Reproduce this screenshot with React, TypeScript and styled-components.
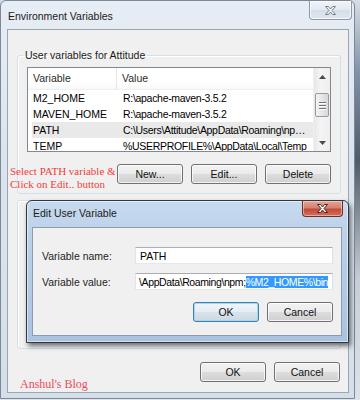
import styled, {createGlobalStyle, css} from "styled-components";

const GlobalStyle = createGlobalStyle`
    html, body {
        margin: 0;
        padding: 0;
    }
    body {
        width: 360px;
        height: 400px;
        overflow: hidden;
        font-family: "Liberation Sans", Arial, sans-serif;
        font-size: 10.5px;
        color: #000;
    }
`;

const Desktop = styled.div`
    position: relative;
    width: 360px;
    height: 400px;
    overflow: hidden;
    background: linear-gradient(180deg, #d7dde4 0%, #7f93a8 18%, #4f5b68 40%, #c8ced5 70%, #dfe3e8 100%);
`;

const Window = styled.div`
    width: 355px;
    height: 399px;
    box-sizing: border-box;
    display: flex;
    flex-direction: column;
    border: 1px solid #7b8898;
    border-radius: 6px 6px 0 0;
    padding: 0 5px 5px 6px;
    background: linear-gradient(180deg, #e6edf5 0%, #dbe4ee 40%, #d5dfea 100%);
`;

const TitleBar = styled.div`
    height: 28px;
    display: flex;
    align-items: flex-start;
    flex-shrink: 0;
`;

const Title = styled.div`
    margin: 9px 0 0 1px;
    line-height: 13px;
    font-size: 10.5px;
    color: #1b1b1b;
`;

const CloseButton = styled.div<{ $active?: boolean }>`
    margin-left: auto;
    display: flex;
    align-items: center;
    justify-content: center;
    box-sizing: border-box;
    border-radius: 0 0 4px 4px;
    ${({$active}) => $active ? css`
        width: 41px;
        height: 16px;
        margin-right: -1px;
        border: 1px solid #6d2f2a;
        border-top: none;
        background: linear-gradient(180deg, #e4a596 0%, #d7826f 45%, #c14a38 55%, #d0705c 100%);
        box-shadow: inset 0 0 0 1px rgba(255, 230, 220, 0.5);
    ` : css`
        width: 43px;
        height: 19px;
        margin-right: -3px;
        border: 1px solid #8c9aab;
        border-top: none;
        background: linear-gradient(180deg, #f1f4f8 0%, #e3e9f0 50%, #d6dee8 51%, #dfe6ee 100%);
        box-shadow: inset 0 0 0 1px rgba(255, 255, 255, 0.7);
    `}
`;

const Client = styled.div`
    flex: 1;
    display: flex;
    flex-direction: column;
    border: 1px solid #9aa6b3;
    background: #f0f0f0;
`;

const GroupBox = styled.fieldset<{ $grow?: boolean }>`
    margin: 19px 7px 0 9px;
    padding: 0 9px 9px 9px;
    border: 1px solid #d5dfe5;
    border-radius: 3px;
    box-shadow: inset 1px 1px 0 #fff;
    min-width: 0;
    ${({$grow}) => $grow && css`
        flex: 1;
        margin-top: 6px;
    `}
`;

const Legend = styled.legend`
    margin-left: -4px;
    padding: 0 2px;
    line-height: 13px;
    color: #1b1b1b;
`;

const ListView = styled.div`
    margin-top: 5px;
    height: 85px;
    box-sizing: border-box;
    display: flex;
    border: 1px solid #828790;
    background: #fff;
`;

const ListBody = styled.div`
    flex: 1;
    min-width: 0;
    overflow: hidden;
`;

const HeaderRow = styled.div`
    display: grid;
    grid-template-columns: 89px 1fr;
    height: 21px;
    border-bottom: 1px solid #eef0f2;
    background: linear-gradient(180deg, #ffffff 0%, #ffffff 70%, #f7f8fa 100%);
`;

const HeaderCell = styled.div`
    line-height: 21px;
    padding-left: 5px;
    color: #2b2b2b;
    &:first-child {
        border-right: 1px solid #e5e5e5;
    }
`;

const Row = styled.div<{ $selected?: boolean }>`
    display: grid;
    grid-template-columns: 85px 1fr;
    height: 16px;
    margin-left: 4px;
    background: ${({$selected}) => $selected ? "#e9e9e9" : "transparent"};
`;

const Cell = styled.div`
    line-height: 16px;
    padding-left: 1px;
    white-space: nowrap;
    overflow: hidden;
    text-overflow: ellipsis;
    & + & {
        padding-left: 6px;
        letter-spacing: -0.3px;
    }
`;

const ScrollBar = styled.div`
    width: 16px;
    display: flex;
    flex-direction: column;
    background: linear-gradient(90deg, #e7e7e7 0%, #f4f4f4 40%, #efefef 100%);
    border-left: 1px solid #f0f0f0;
`;

const ScrollArrow = styled.div`
    height: 17px;
    display: flex;
    align-items: center;
    justify-content: center;
`;

const ScrollTrack = styled.div`
    flex: 1;
    padding-top: 8px;
`;

const Thumb = styled.div`
    margin: 0 1px;
    height: 24px;
    box-sizing: border-box;
    border: 1px solid #979aa0;
    border-radius: 2px;
    background: linear-gradient(90deg, #f3f3f3 0%, #e6e6e6 50%, #d8d8d8 100%);
    display: flex;
    flex-direction: column;
    align-items: center;
    justify-content: center;
    gap: 2px;
`;

const Grip = styled.div`
    width: 7px;
    height: 1px;
    background: #6f7378;
    box-shadow: 0 1px 0 #fff;
`;

const ButtonRow = styled.div<{ $top?: number }>`
    display: flex;
    justify-content: flex-end;
    gap: 8px;
    margin-top: ${({$top}) => $top ?? 12}px;
`;

const Button = styled.div<{ $focused?: boolean }>`
    width: 66px;
    height: 20px;
    box-sizing: border-box;
    display: flex;
    align-items: center;
    justify-content: center;
    border: 1px solid #707070;
    border-radius: 3px;
    background: linear-gradient(180deg, #f2f2f2 0%, #ebebeb 48%, #dddddd 52%, #cfcfcf 100%);
    box-shadow: inset 0 0 0 1px rgba(255, 255, 255, 0.75);
    color: #111;
    ${({$focused}) => $focused && css`
        border-color: #3c7fb1;
        background: linear-gradient(180deg, #f0f5f9 0%, #e6eef4 48%, #d7e3ec 52%, #cbd9e4 100%);
        box-shadow: inset 0 0 0 1px #a8d6f2;
    `}
`;

const BottomRow = styled.div`
    display: flex;
    align-items: flex-start;
    gap: 8px;
    padding: 13px 8px 1px 12px;
`;

const BlogName = styled.div`
    margin-right: auto;
    padding-top: 15px;
    font-family: "Liberation Serif", "Times New Roman", serif;
    font-size: 12px;
    line-height: 14px;
    color: #ee4a5a;
`;

const Annotation = styled.div`
    position: absolute;
    left: 10px;
    top: 165px;
    font-family: "Liberation Serif", "Times New Roman", serif;
    font-size: 11px;
    line-height: 13px;
    color: #f23c3c;
`;

const Dialog = styled.div`
    position: absolute;
    left: 26px;
    top: 200px;
    width: 323px;
    height: 143px;
    box-sizing: border-box;
    display: flex;
    flex-direction: column;
    border: 1px solid #2e3742;
    border-radius: 6px 6px 0 0;
    padding: 0 6px 6px 5px;
    background: linear-gradient(180deg, #c7daee 0%, #b9d0e8 30%, #a9c3e0 100%);
    box-shadow: 2px 3px 5px rgba(0, 0, 0, 0.55), inset 0 0 0 1px rgba(255, 255, 255, 0.5);
`;

const DialogTitleBar = styled(TitleBar)`
    height: 26px;
`;

const DialogTitle = styled(Title)`
    margin-top: 6px;
`;

const DialogClient = styled.div`
    flex: 1;
    border: 1px solid #8e9bab;
    background: #f0f0f0;
    padding: 19px 8px 0 9px;
`;

const FieldRow = styled.div`
    display: grid;
    grid-template-columns: 93px 198px;
    align-items: center;
    & + & {
        margin-top: 9px;
    }
`;

const FieldLabel = styled.div`
    color: #1e1e1e;
`;

const TextBox = styled.div<{ $scrolled?: boolean }>`
    height: 17px;
    box-sizing: border-box;
    display: flex;
    align-items: center;
    justify-content: ${({$scrolled}) => $scrolled ? "flex-end" : "flex-start"};
    padding: 0 4px;
    overflow: hidden;
    white-space: nowrap;
    letter-spacing: ${({$scrolled}) => $scrolled ? "-0.4px" : "0"};
    border: 1px solid #abadb3;
    border-color: #abadb3 #dbdfe6 #e3e9ef #e2e3ea;
    background: #fff;
    & > span {
        flex-shrink: 0;
    }
`;

const Selection = styled.span`
    background: #3399ff;
    color: #fff;
`;

const CloseGlyph = ({active}: { active?: boolean }) => (
    <svg width="11" height="9" viewBox="0 0 11 9">
        <path
            d="M0.5 0.5 H3.5 L5.5 3 L7.5 0.5 H10.5 L7 4.5 L10.5 8.5 H7.5 L5.5 6 L3.5 8.5 H0.5 L4 4.5 Z"
            fill={active ? "#ffffff" : "#f4f6f9"}
            stroke={active ? "#4a2320" : "#75808c"}
            strokeWidth="1"
            strokeLinejoin="round"
        />
    </svg>
);

const Arrow = ({down}: { down?: boolean }) => (
    <svg width="7" height="4" viewBox="0 0 7 4">
        <path d={down ? "M0 0 H7 L3.5 4 Z" : "M0 4 H7 L3.5 0 Z"} fill="#4a4a4a"/>
    </svg>
);

const userVariables = [
    {name: "M2_HOME", value: "R:\\apache-maven-3.5.2"},
    {name: "MAVEN_HOME", value: "R:\\apache-maven-3.5.2"},
    {name: "PATH", value: "C:\\Users\\Attitude\\AppData\\Roaming\\npm;%M2_HOME%\\bin", selected: true},
    {name: "TEMP", value: "%USERPROFILE%\\AppData\\Local\\Temp"},
];

export default function App() {
    return (
        <Desktop>
            <GlobalStyle/>
            <Window>
                <TitleBar>
                    <Title>Environment Variables</Title>
                    <CloseButton><CloseGlyph/></CloseButton>
                </TitleBar>
                <Client>
                    <GroupBox>
                        <Legend>User variables for Attitude</Legend>
                        <ListView>
                            <ListBody>
                                <HeaderRow>
                                    <HeaderCell>Variable</HeaderCell>
                                    <HeaderCell>Value</HeaderCell>
                                </HeaderRow>
                                {userVariables.map(item => (
                                    <Row key={item.name} $selected={item.selected}>
                                        <Cell>{item.name}</Cell>
                                        <Cell>{item.value}</Cell>
                                    </Row>
                                ))}
                            </ListBody>
                            <ScrollBar>
                                <ScrollArrow><Arrow/></ScrollArrow>
                                <ScrollTrack>
                                    <Thumb>
                                        <Grip/>
                                        <Grip/>
                                        <Grip/>
                                    </Thumb>
                                </ScrollTrack>
                                <ScrollArrow><Arrow down/></ScrollArrow>
                            </ScrollBar>
                        </ListView>
                        <ButtonRow>
                            <Button>New...</Button>
                            <Button>Edit...</Button>
                            <Button>Delete</Button>
                        </ButtonRow>
                    </GroupBox>
                    <GroupBox $grow/>
                    <BottomRow>
                        <BlogName>Anshul's Blog</BlogName>
                        <Button>OK</Button>
                        <Button>Cancel</Button>
                    </BottomRow>
                </Client>
            </Window>

            <Annotation>
                Select PATH variable &amp;<br/>
                Click on Edit.. button
            </Annotation>

            <Dialog>
                <DialogTitleBar>
                    <DialogTitle>Edit User Variable</DialogTitle>
                    <CloseButton $active><CloseGlyph active/></CloseButton>
                </DialogTitleBar>
                <DialogClient>
                    <FieldRow>
                        <FieldLabel>Variable name:</FieldLabel>
                        <TextBox><span>PATH</span></TextBox>
                    </FieldRow>
                    <FieldRow>
                        <FieldLabel>Variable value:</FieldLabel>
                        <TextBox $scrolled>
                            <span>\AppData\Roaming\npm;</span>
                            <Selection>%M2_HOME%\bin</Selection>
                        </TextBox>
                    </FieldRow>
                    <ButtonRow $top={12}>
                        <Button $focused>OK</Button>
                        <Button>Cancel</Button>
                    </ButtonRow>
                </DialogClient>
            </Dialog>
        </Desktop>
    );
}
